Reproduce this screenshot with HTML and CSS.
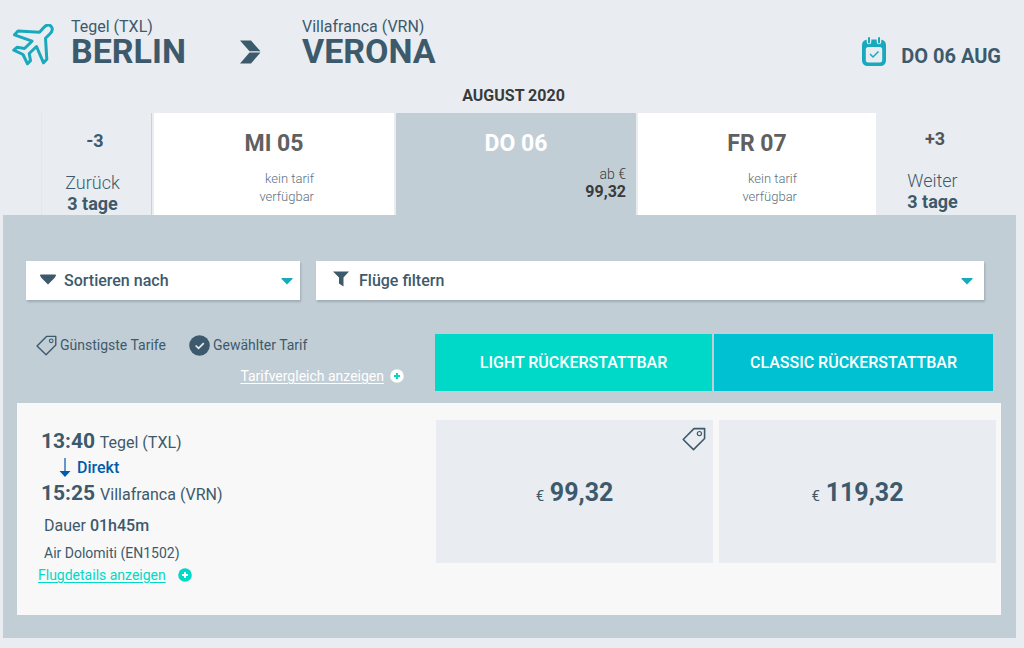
FILE: index.html
```html
<!DOCTYPE html>
<html lang="de">
<head>
<meta charset="utf-8">
<meta name="viewport" content="width=device-width, initial-scale=1">
<title>Berlin – Verona</title>
<link rel="stylesheet" href="styles.css">
</head>
<body>
<svg class="sprite" aria-hidden="true">
  <symbol id="tag" viewBox="0 0 24 24">
    <path d="M1.200 12.500 12 1.600H22.600V11.500L11.500 22.600Z" fill="none" stroke="currentColor" stroke-width="1.600" stroke-linejoin="round"/>
    <circle cx="17.400" cy="6.600" r="2.100" fill="none" stroke="currentColor" stroke-width="1.200"/>
  </symbol>
</svg>
<header class="header">
  <svg class="plane" viewBox="0 0 42 42" aria-hidden="true">
    <path d="M39 2.200C36.800 0 34 1.200 32 3.200L27.500 8.200 6 7 2.500 10.800 20 17.200 12.500 24.500 5 23.300 1.800 26.200 11 30.500 15.500 39.800 18.500 36.600 17.200 29.500 24.500 22.500 31.500 38.800 34.800 35.200 33.500 14.200 38 9.800C40.300 7.500 41.200 4.400 39 2.200Z"/>
  </svg>
  <div class="place">
    <span class="airport">Tegel (TXL)</span>
    <span class="city">BERLIN</span>
  </div>
  <svg class="chevron" viewBox="0 0 21 24" aria-hidden="true"><path d="M0 0.500H11L20.500 11.300H9.500ZM9.500 12.600H20.500L11 23.500H0Z"/></svg>
  <div class="place">
    <span class="airport">Villafranca (VRN)</span>
    <span class="city">VERONA</span>
  </div>
  <div class="date">
    <svg class="calendar" viewBox="0 0 26 30" aria-hidden="true">
      <rect x="1" y="2.500" width="24" height="26.500" rx="5.500" fill="#18a9bd"/>
      <rect x="4.800" y="10" width="16.400" height="15.500" rx="2.500" fill="#e9edf1"/>
      <path d="M8 0V5M18 0V5" stroke="#e9edf1" stroke-width="4.600" stroke-linecap="round"/>
      <path d="M8 1V5.500M18 1V5.500" stroke="#18a9bd" stroke-width="2" stroke-linecap="round"/>
      <path d="M9 17 12 20 17.500 14.500" fill="none" stroke="#18a9bd" stroke-width="1.500"/>
    </svg>
    <span>DO 06 AUG</span>
  </div>
</header>
<main>
  <h1 class="month">AUGUST 2020</h1>
  <nav class="days">
    <button class="day step prev" type="button"><b class="offset">-3</b><span class="move">Zurück</span><b>3 tage</b></button>
    <button class="day" type="button"><span class="name">MI 05</span><span class="none">kein tarif verfügbar</span></button>
    <button class="day active" type="button"><span class="name">DO 06</span><span class="from">ab €</span><b class="amount">99,32</b></button>
    <button class="day" type="button"><span class="name">FR 07</span><span class="none">kein tarif verfügbar</span></button>
    <button class="day step next" type="button"><b class="offset">+3</b><span class="move">Weiter</span><b>3 tage</b></button>
  </nav>
  <section class="panel">
    <div class="controls">
      <div class="picker">
        <svg class="lead" viewBox="0 0 16 16" aria-hidden="true"><path d="M0 4.500Q0 3.500 1 3.500H15Q16 3.500 16 4.500L14.500 7 8 13.500 1.500 7Z"/></svg>
        <select aria-label="Sortieren nach"><option>Sortieren nach</option></select>
        <svg class="caret" viewBox="0 0 12 8" aria-hidden="true"><path d="M0.500 1H11.500V2L6 7.500 0.500 2Z"/></svg>
      </div>
      <div class="picker filter">
        <svg class="lead" viewBox="0 0 16 16" aria-hidden="true"><path d="M0 0.500H16L10.500 6.500V15.500L6 12.500V6.500Z"/></svg>
        <select aria-label="Flüge filtern"><option>Flüge filtern</option></select>
        <svg class="caret" viewBox="0 0 12 8" aria-hidden="true"><path d="M0.500 1H11.500V2L6 7.500 0.500 2Z"/></svg>
      </div>
    </div>
    <div class="fares">
      <div class="info">
        <div class="legend">
          <span class="key"><svg class="mark" viewBox="0 0 24 24" aria-hidden="true"><use href="#tag"/></svg>Günstigste Tarife</span>
          <span class="key"><svg class="mark" viewBox="0 0 22 22" aria-hidden="true"><circle cx="11" cy="11" r="10.800" fill="currentColor"/><path d="M7 11 10 14 15.500 8.500" fill="none" stroke="#e9edf1" stroke-width="1.800"/></svg>Gewählter Tarif</span>
        </div>
        <a class="link compare" href="#vergleich"><span>Tarifvergleich anzeigen</span><svg class="plus" viewBox="0 0 14 14" aria-hidden="true"><circle cx="7" cy="7" r="6.800" fill="#fff"/><path d="M7 4V10M4 7H10" stroke="#00d9c8" stroke-width="2"/></svg></a>
      </div>
      <button class="fare light" type="button">LIGHT RÜCKERSTATTBAR</button>
      <button class="fare classic" type="button">CLASSIC RÜCKERSTATTBAR</button>
    </div>
    <article class="flight">
      <div class="details">
        <div class="stop"><b>13:40</b> Tegel (TXL)</div>
        <div class="direct"><svg viewBox="0 0 12 20" aria-hidden="true"><path d="M5.400 0H6.600V13H11.500L6 19 0.500 13H5.400Z" fill="currentColor"/></svg>Direkt</div>
        <div class="stop"><b>15:25</b> Villafranca (VRN)</div>
        <div class="duration">Dauer <b>01h45m</b></div>
        <div class="carrier">Air Dolomiti (EN1502)</div>
        <a class="link more" href="#details"><span>Flugdetails anzeigen</span><svg class="plus" viewBox="0 0 14 14" aria-hidden="true"><circle cx="7" cy="7" r="6.800" fill="#00d9c8"/><path d="M7 4V10M4 7H10" stroke="#fff" stroke-width="1.800"/></svg></a>
      </div>
      <button class="price" type="button"><span>€</span> <b>99,32</b><svg class="cheapest" aria-hidden="true"><use href="#tag"/></svg></button>
      <button class="price" type="button"><span>€</span> <b>119,32</b></button>
    </article>
  </section>
</main>
</body>
</html>
```
FILE: styles.css
```css
* { box-sizing: border-box; }
body {
  margin: 0;
  background: #e9edf1;
  color: #3d5a6c;
  font-family: Roboto, "Liberation Sans", sans-serif;
}
button, select {
  border: 0;
  padding: 0;
  color: inherit;
  font: inherit;
  cursor: pointer;
}
.sprite { position: absolute; width: 0; height: 0; }

.header {
  display: flex;
  align-items: flex-start;
  padding: 16px 23px 0 12px;
  min-height: 84px;
}
.plane {
  width: 42px;
  height: 42px;
  margin: 8px 17px 0 0;
  fill: none;
  stroke: #18a9bd;
  stroke-width: 3;
  stroke-linejoin: round;
}
.place { display: flex; flex-direction: column; }
.airport { font-size: 16px; line-height: 21px; }
.city { font-size: 34px; font-weight: 700; line-height: 28px; }
.chevron {
  width: 21px;
  height: 24px;
  margin: 24px 41px 0 54px;
  fill: #3d5a6c;
}
.date {
  display: flex;
  align-items: center;
  gap: 14px;
  margin: 19px 0 0 auto;
  font-size: 20px;
  font-weight: 700;
}
.date span { padding-top: 9px; }
.calendar { width: 26px; height: 30px; }

.month {
  margin: 0;
  padding: 0 0 5px 3px;
  color: #3a3a3a;
  font-size: 16px;
  line-height: 24px;
  text-align: center;
}
.days {
  display: grid;
  grid-template-columns: 111fr 240fr 240fr 238fr 109fr;
  gap: 2px;
  margin: 0 37px 0 41px;
}
.day {
  display: flex;
  flex-direction: column;
  align-items: center;
  min-height: 102px;
  padding-top: 17px;
  background: #fff;
  color: #606060;
}
.name { font-size: 23px; font-weight: 700; line-height: 28px; }
.none {
  width: 80px;
  margin-top: 12px;
  color: #5c7180;
  font-size: 13px;
  font-weight: 300;
  line-height: 18px;
  text-align: right;
}
.day.active { background: #c2ced6; color: #3a3a3a; }
.active .name { color: #fff; }
.active .from, .active .amount { align-self: flex-end; margin-right: 10px; line-height: 18px; }
.active .from { margin-top: 7px; font-size: 14px; font-weight: 300; }
.active .amount { font-size: 16px; }
.day.step {
  padding-top: 15px;
  background: none;
  color: #3d5a6c;
  font-size: 18px;
  line-height: 21px;
}
.day.prev {
  padding: 17px 8px 0 0;
  border-left: 1px solid #e1e7ea;
  border-right: 1px solid #cbd2d6;
}
.offset { margin: 0 0 21px 5px; }
.next .offset { color: #555; }
.move { font-weight: 300; }

.panel {
  margin: 0 8px 0 3px;
  padding: 46px 15px 23px 14px;
  background: #c2ced6;
}
.controls {
  display: grid;
  grid-template-columns: 274fr 668fr;
  gap: 16px;
  margin: 0 17px 0 9px;
}
.picker {
  display: grid;
  grid-template-columns: 38px 1fr 28px;
  align-items: center;
  background: #fff;
  box-shadow: 1px 2px 2px #9fabb5;
}
.picker.filter { grid-template-columns: 42px 1fr 24px; }
.picker select {
  grid-area: 1 / 1 / 2 / 4;
  height: 39px;
  padding-left: 38px;
  appearance: none;
  background: none;
  font-size: 16px;
  font-weight: 500;
}
.picker.filter select { padding-left: 43px; }
.lead, .caret { z-index: 1; grid-row: 1; pointer-events: none; }
.lead { grid-column: 1; width: 16px; height: 16px; margin: 0 0 4px 14px; fill: #3d5a6c; }
.filter .lead { margin-left: 17px; }
.caret { grid-column: 3; width: 12px; height: 8px; margin-left: 9px; fill: #18a9bd; }
.filter .caret { margin-left: 1px; }

.fares {
  display: grid;
  grid-template-columns: 416fr 277fr 279fr;
  gap: 2px;
  margin: 34px 8px 12px 0;
}
.info { padding-right: 29px; }
.legend { display: flex; gap: 23px; padding-left: 19px; font-size: 14px; line-height: 22px; }
.key { display: flex; align-items: center; gap: 3px; }
.mark { width: 21px; height: 21px; }
.link { display: flex; align-items: center; font-size: 14px; line-height: 20px; text-decoration: none; }
.link span { text-decoration: underline; text-underline-offset: 2px; }
.plus { width: 14px; height: 14px; }
.compare { justify-content: flex-end; gap: 6px; margin-top: 10px; color: #fff; }
.fare { min-height: 57px; color: #fff; font-size: 16px; font-weight: 500; }
.light { background: #00d9c8; }
.classic { background: #00c1d1; }

.flight {
  display: grid;
  grid-template-columns: 413fr 277fr 277fr;
  gap: 6px;
  align-items: start;
  min-height: 212px;
  padding: 17px 5px 30px 0;
  background: #f8f8f8;
}
.details { padding: 8px 0 0 24px; font-size: 16px; }
.stop { line-height: 26px; }
.stop b { font-size: 21px; margin-right: 1px; }
.direct {
  display: flex;
  align-items: center;
  gap: 6px;
  padding-left: 18px;
  color: #005bab;
  font-weight: 500;
  line-height: 24px;
}
.direct svg { width: 12px; height: 20px; }
.duration { padding: 7px 0 0 3px; line-height: 22px; }
.duration b { font-weight: 500; }
.carrier { padding: 6px 0 0 3px; font-size: 14px; line-height: 20px; }
.more { gap: 12px; margin: 2px 0 0 -3px; color: #00d9c8; }
.price { position: relative; min-height: 143px; padding-top: 2px; background: #e9edf1; font-size: 15px; }
.price b { margin-left: 2px; font-size: 25px; }
.cheapest { position: absolute; top: 7px; right: 7px; width: 24px; height: 24px; }
```
